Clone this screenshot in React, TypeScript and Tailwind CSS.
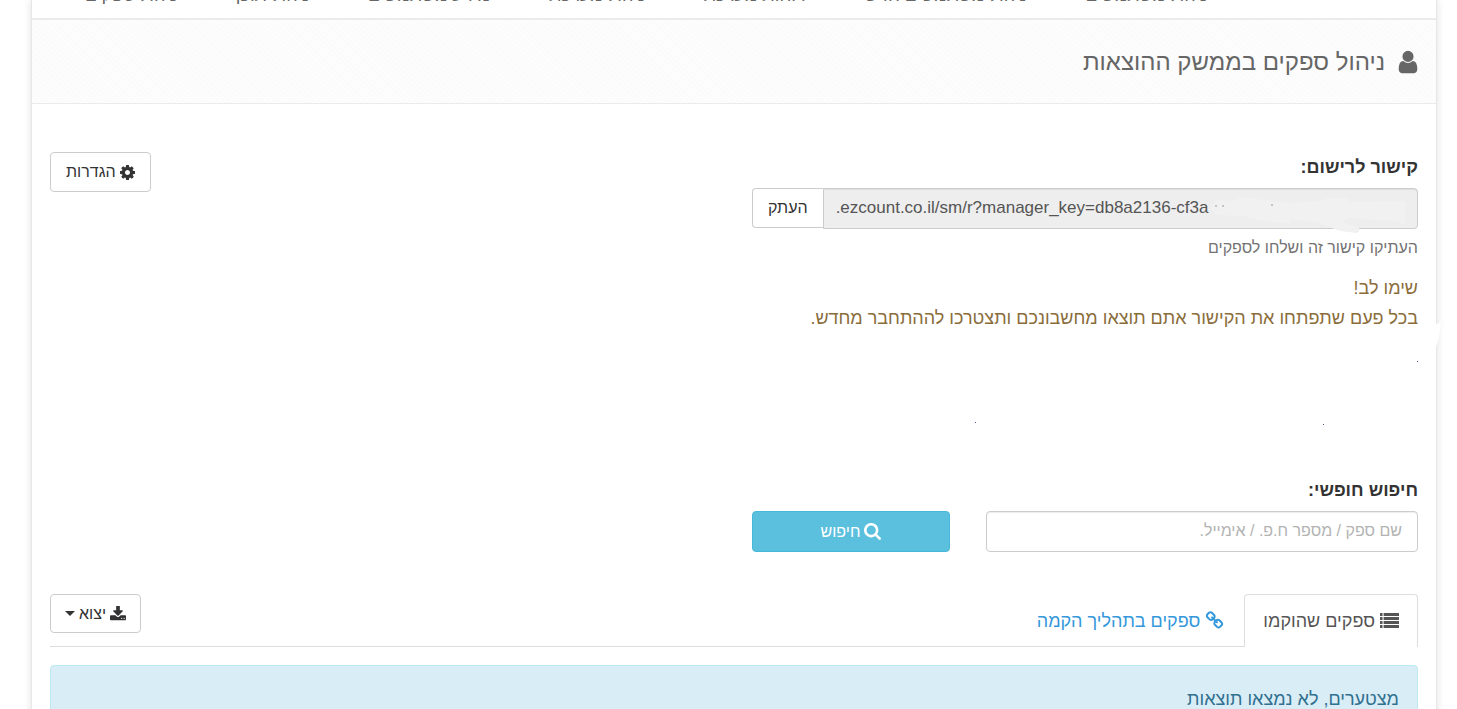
import { useState } from "react"
import type { ReactNode } from "react"

const navItems = [
  "ניהול משתמשים",
  "ניהול משתמשים חדש",
  "דוחות מערכת",
  "ניהול מערכת",
  "מידע משתמשים",
  "ניהול תוכן",
  "ניהול ספקים",
]

function Icon({ className, viewBox = "0 0 1792 1792", children }: { className: string; viewBox?: string; children: ReactNode }) {
  return (
    <svg viewBox={viewBox} fill="currentColor" aria-hidden="true" className={`shrink-0 ${className}`}>
      {children}
    </svg>
  )
}

const UserIcon = () => (
  <Icon className="size-[26px]">
    <path d="M1536 1399q0 109-62.5 187t-150.5 78h-854q-88 0-150.5-78t-62.5-187q0-85 8.5-160.5t31.5-152 58.5-131 94-89 134.5-34.5q131 128 313 128t313-128q76 0 134.5 34.5t94 89 58.5 131 31.5 152 8.5 160.5zm-256-887q0 159-112.5 271.5t-271.5 112.5-271.5-112.5-112.5-271.5 112.5-271.5 271.5-112.5 271.5 112.5 112.5 271.5z" />
  </Icon>
)

const CogIcon = () => (
  <Icon className="size-[15px]" viewBox="128 128 1536 1536">
    <path d="M1152 896q0-106-75-181t-181-75-181 75-75 181 75 181 181 75 181-75 75-181zm512-109v222q0 12-8 23t-20 13l-185 28q-19 54-39 91 35 50 107 138 10 12 10 25t-9 23q-27 37-99 108t-94 71q-12 0-26-9l-138-108q-44 23-91 38-16 136-29 186-7 28-36 28h-222q-14 0-24.5-8.5t-11.5-21.5l-28-184q-49-16-90-37l-141 107q-10 9-25 9-14 0-25-11-126-114-165-168-7-10-7-23 0-12 8-23 15-21 51-66.5t54-70.5q-27-50-41-99l-183-27q-13-2-21-12.5t-8-23.5v-222q0-12 8-23t19-13l186-28q14-46 39-92-40-57-107-138-10-12-10-24 0-10 9-23 26-36 98.5-107.5t94.5-71.5q13 0 26 10l138 107q44-23 91-38 16-136 29-186 7-28 36-28h222q14 0 24.5 8.5t11.5 21.5l28 184q49 16 90 37l142-107q9-9 24-9 13 0 25 10 129 119 165 170 7 8 7 22 0 12-8 23-15 21-51 66.5t-54 70.5q26 50 41 98l183 28q13 2 21 12.5t8 23.5z" />
  </Icon>
)

const SearchIcon = () => (
  <Icon className="size-[17px]" viewBox="64 128 1664 1664">
    <path d="M1216 832q0-185-131.5-316.5t-316.5-131.5-316.5 131.5-131.5 316.5 131.5 316.5 316.5 131.5 316.5-131.5 131.5-316.5zm512 832q0 52-38 90t-90 38q-54 0-90-38l-343-342q-179 124-399 124-143 0-273.5-55.5t-225-150-150-225-55.5-273.5 55.5-273.5 150-225 225-150 273.5-55.5 273.5 55.5 225 150 150 225 55.5 273.5q0 220-124 399l343 343q37 37 37 90z" />
  </Icon>
)

const LinkIcon = () => (
  <Icon className="size-[19px]">
    <path d="M1520 1216q0-40-28-68l-208-208q-28-28-68-28-42 0-72 32 3 3 19 18.5t21.5 21.5 15 19 13 25.5 3.5 27.5q0 40-28 68t-68 28q-15 0-27.5-3.5t-25.5-13-19-15-21.5-21.5-18.5-19q-33 31-33 73 0 40 28 68l206 207q27 27 68 27 40 0 68-26l147-146q28-28 28-67zm-703-705q0-40-28-68l-206-207q-28-28-68-28-39 0-68 27l-147 146q-28 28-28 67 0 40 28 68l208 208q27 27 68 27 42 0 72-31-3-3-19-18.5t-21.5-21.5-15-19-13-25.5-3.5-27.5q0-40 28-68t68-28q15 0 27.5 3.5t25.5 13 19 15 21.5 21.5 18.5 19q33-31 33-73zm895 705q0 120-85 203l-147 146q-83 83-203 83-121 0-204-85l-206-207q-83-83-83-203 0-123 88-209l-88-88q-86 88-208 88-120 0-204-84l-208-208q-84-84-84-204t85-203l147-146q83-83 203-83 121 0 204 85l206 207q83 83 83 203 0 123-88 209l88 88q86-88 208-88 120 0 204 84l208 208q84 84 84 204z" />
  </Icon>
)

const DownloadIcon = () => (
  <Icon className="size-4" viewBox="64 64 1664 1664">
    <path d="M1344 1344q0-26-19-45t-45-19-45 19-19 45 19 45 45 19 45-19 19-45zm256 0q0-26-19-45t-45-19-45 19-19 45 19 45 45 19 45-19 19-45zm128-224v320q0 40-28 68t-68 28h-1472q-40 0-68-28t-28-68v-320q0-40 28-68t68-28h465l135 136q58 56 136 56t136-56l136-136h464q40 0 68 28t28 68zm-325-569q17 41-14 70l-448 448q-18 19-45 19t-45-19l-448-448q-31-29-14-70 17-39 59-39h256v-448q0-26 19-45t45-19h256q26 0 45 19t19 45v448h256q42 0 59 39z" />
  </Icon>
)

const ListIcon = () => (
  <Icon className="size-[19px]">
    {[96, 472, 848, 1224].map((y) => (
      <g key={y}>
        <rect x="0" y={y} width="240" height="290" rx="24" />
        <rect x="340" y={y} width="1452" height="290" rx="24" />
      </g>
    ))}
  </Icon>
)

export default function App() {
  const [query, setQuery] = useState("")

  return (
    <div dir="rtl" className="h-screen overflow-hidden bg-white font-['Liberation_Sans',sans-serif] text-[#333]">
      <div className="relative mr-5 ml-[31px] min-h-full border-x border-[#e7e7e7] shadow-[0_0_8px_rgba(0,0,0,0.12)]">
        <nav className="flex h-[18px] items-end gap-[59px] overflow-hidden ps-[229px] pb-[11px] text-lg leading-6 whitespace-nowrap text-[#666]">
          {navItems.map((item) => (
            <a key={item} href="#">{item}</a>
          ))}
        </nav>

        <header className="flex h-[86px] items-center gap-2.5 border-t-2 border-b border-[#ebebeb] bg-[repeating-linear-gradient(45deg,#fbfbfb_0px,#fbfbfb_2px,#fdfdfd_2px,#fdfdfd_4px)] px-[15px] text-[#666]">
          <UserIcon />
          <h1 className="text-2xl">ניהול ספקים בממשק ההוצאות</h1>
        </header>

        <main className="px-[18px] pt-12">
          <div className="grid grid-cols-2 gap-9">
            <section>
              <label htmlFor="register-link" className="block text-lg leading-[30px] font-bold">קישור לרישום:</label>
              <div className="relative mt-1.5 flex items-start">
                <input
                  id="register-link"
                  dir="ltr"
                  readOnly
                  value=".ezcount.co.il/sm/r?manager_key=db8a2136-cf3a"
                  className="h-[41px] min-w-0 flex-1 rounded-r border border-[#ccc] bg-[#eee] px-3 pb-0.5 text-[17px] text-[#555] shadow-[inset_0_1px_1px_rgba(0,0,0,0.075)]"
                />
                <button type="button" className="h-10 rounded-l border border-s-0 border-[#ccc] px-[15px] text-base">העתק</button>
                <svg viewBox="0 0 216 50" aria-hidden="true" className="pointer-events-none absolute top-0 right-0 h-[50px] w-[216px]">
                  <path
                    d="M8 20L14 12 34 13 37 9 90 15 122 12 126 10 146 10 148 14 200 13Q203 13 203 16V34Q203 36 200 36L197 33 146 30 139 34 156 39Q160 43 154 45L138 43 122 37 118 34 88 31V35L70 34 40 28 14 27Z"
                    fill="#f1f1f1"
                  />
                  <path d="M13 18h2M20 18h2M69 17h2" stroke="#999" />
                </svg>
              </div>
              <p className="mt-1.5 text-base leading-[26px] text-[#737373]">העתיקו קישור זה ושלחו לספקים</p>
              <p className="mt-3 text-lg leading-[30px] text-[#8a6d3b]">
                שימו לב!
                <br />
                בכל פעם שתפתחו את הקישור אתם תוצאו מחשבונכם ותצטרכו לההתחבר מחדש.
              </p>
            </section>
            <div className="flex items-start justify-end">
              <button type="button" className="flex h-10 items-center gap-1 rounded border border-[#ccc] px-[15px] text-base">
                <CogIcon />
                הגדרות
              </button>
            </div>
          </div>

          <form className="mt-[142px] grid grid-cols-2 gap-9" onSubmit={(e) => e.preventDefault()}>
            <div className="grid grid-cols-3 items-end gap-9">
              <div className="col-span-2">
                <label htmlFor="search" className="block text-lg leading-[30px] font-bold">חיפוש חופשי:</label>
                <input
                  id="search"
                  value={query}
                  onChange={(e) => setQuery(e.target.value)}
                  placeholder="שם ספק / מספר ח.פ. / אימייל."
                  className="mt-1.5 block h-[41px] w-full rounded border border-[#ccc] px-[15px] pb-0.5 text-base shadow-[inset_0_1px_1px_rgba(0,0,0,0.075)] placeholder:text-[#b3b3b3]"
                />
              </div>
              <button type="submit" className="flex h-[41px] items-center justify-center gap-1 rounded border border-[#46b8da] bg-[#5bc0de] text-base text-white">
                <SearchIcon />
                חיפוש
              </button>
            </div>
          </form>

          <div className="mt-[42px] flex items-start justify-between border-b border-[#ddd] text-lg">
            <div role="tablist" className="-mb-px flex">
              <button type="button" role="tab" aria-selected="true" className="flex h-[53px] items-center gap-[5px] rounded-t border border-b-0 border-[#ddd] bg-white px-[18px] text-[#555]">
                <ListIcon />
                ספקים שהוקמו
              </button>
              <button type="button" role="tab" aria-selected="false" className="flex h-[53px] items-center gap-[5px] px-5 text-[#3498db]">
                <LinkIcon />
                ספקים בתהליך הקמה
              </button>
            </div>
            <button type="button" className="flex h-[39px] items-center gap-1 rounded border border-[#ccc] px-[14px] text-base">
              <DownloadIcon />
              יצוא
              <span className="border-x-5 border-t-5 border-x-transparent border-t-[#333]" />
            </button>
          </div>

          <div role="status" className="mt-[18px] rounded border border-[#bce8f1] bg-[#d9edf7] p-[18px] text-lg leading-[30px] text-[#31708f]">
            מצטערים, לא נמצאו תוצאות
          </div>
        </main>

        <svg viewBox="0 0 490 130" aria-hidden="true" className="pointer-events-none absolute top-[320px] -right-5 h-[130px] w-[490px]">
          <path d="M465 5L475 3Q473 20 470 27L469 31H465Z" fill="#fff" />
          <path d="M451 41h1v1h-1zM357 104h1v1h-1zM9 102h1v1h-1z" fill="#558" />
        </svg>
      </div>
    </div>
  )
}
